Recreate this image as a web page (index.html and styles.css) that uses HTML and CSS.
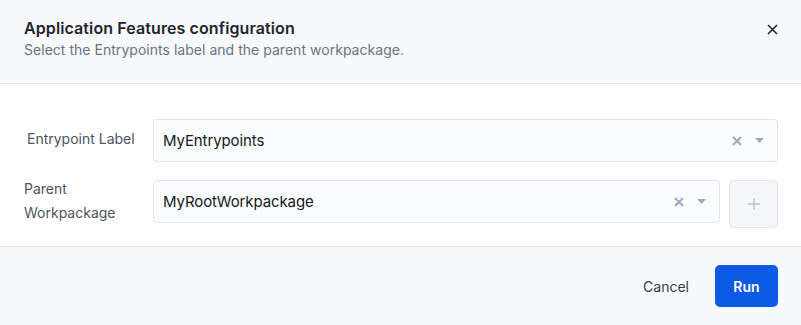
FILE: index.html
```html
<!DOCTYPE html>
<html lang="en">
<head>
  <meta charset="UTF-8" />
  <title>Application Features configuration</title>
  <link rel="stylesheet" href="styles.css">
</head>
<body>
  <div class="dialog">
    <header class="dlg-head">
      <div>
        <h1>Application Features configuration</h1>
        <p>Select the Entrypoints label and the parent workpackage.</p>
      </div>
      <button class="close-btn" aria-label="Close">
        <svg width="11" height="11" viewBox="0 0 11 11"><path d="M1 1L10 10M10 1L1 10" stroke="#1f2937" stroke-width="1.6" fill="none"/></svg>
      </button>
    </header>

    <section class="dlg-body">
      <div class="row">
        <label class="lbl lbl-first">Entrypoint Label</label>
        <div class="select">
          <span class="value">MyEntrypoints</span>
          <svg class="clear" width="10" height="10" viewBox="0 0 10 10"><path d="M1 1L9 9M9 1L1 9" stroke="#9ca9c3" stroke-width="2" fill="none"/></svg>
          <svg class="caret" width="9" height="5" viewBox="0 0 9 5"><path d="M0 0H9L4.5 5Z" fill="#9ca9c3"/></svg>
        </div>
      </div>
      <div class="row">
        <label class="lbl">Parent Workpackage</label>
        <div class="select">
          <span class="value">MyRootWorkpackage</span>
          <svg class="clear" width="10" height="10" viewBox="0 0 10 10"><path d="M1 1L9 9M9 1L1 9" stroke="#9ca9c3" stroke-width="2" fill="none"/></svg>
          <svg class="caret" width="9" height="5" viewBox="0 0 9 5"><path d="M0 0H9L4.5 5Z" fill="#9ca9c3"/></svg>
        </div>
        <button class="add-btn" aria-label="Add">
          <svg width="12" height="12" viewBox="0 0 12 12"><path d="M6 0V12M0 6H12" stroke="#a3acb9" stroke-width="1" fill="none"/></svg>
        </button>
      </div>
    </section>

    <footer class="dlg-foot">
      <button class="btn-cancel">Cancel</button>
      <button class="btn-run">Run</button>
    </footer>
  </div>
</body>
</html>
```

FILE: styles.css
```css
body { margin: 0; font-family: Inter, "Noto Sans", sans-serif; background: #fff; }
.dialog { width: 801px; height: 325px; display: flex; flex-direction: column; }
.dlg-head { background: #f7f9fc; border-bottom: 1px solid #e4e7ec; padding: 16px 23px 23px 24px; display: flex; justify-content: space-between; align-items: flex-start; }
.dlg-head h1 { margin: 0; font-size: 16px; line-height: 24px; font-weight: 600; color: #1f2430; letter-spacing: 0.1px; }
.dlg-head p { margin: 0; font-size: 14px; line-height: 20px; color: #6b7383; letter-spacing: 0.03px; }
.close-btn { background: none; border: none; padding: 0; margin-top: 8px; width: 11px; height: 11px; display: flex; cursor: pointer; }
.dlg-body { background: #fff; padding: 35px 23px 18px 24px; display: flex; flex-direction: column; gap: 18px; }
.row { display: flex; align-items: flex-start; gap: 9px; }
.lbl { width: 120px; flex: none; font-size: 14px; line-height: 24px; color: #4b5462; }
.lbl-first { padding-left: 3px; width: 117px; padding-top: 8px; }
.row:nth-child(2) .lbl { margin-top: -3px; }
.select { flex: 1; height: 41px; border: 1px solid #e1e5ee; border-radius: 4px; background: #fbfcfe; display: flex; align-items: center; padding: 0 13px 0 9px; }
.value { flex: 1; font-size: 15px; color: #141a25; letter-spacing: -0.1px; }
.clear { margin-right: 13px; }
.add-btn { width: 49px; height: 48px; flex: none; border: 1px solid #e1e5ee; border-radius: 4px; background: #f4f6f9; display: flex; align-items: center; justify-content: center; padding: 0; }
.dlg-foot { flex: 1; background: #f7f9fc; border-top: 1px solid #e4e7ec; padding: 18px 23px 18px 24px; display: flex; justify-content: flex-end; align-items: flex-start; gap: 12px; }
.btn-cancel { background: none; border: none; font-family: inherit; font-size: 14px; color: #343b48; height: 42px; padding: 0 14px; }
.btn-run { background: #0d5ae6; color: #fff; border: none; border-radius: 5px; font-family: inherit; font-size: 14px; font-weight: 600; width: 63px; height: 42px; }
```
